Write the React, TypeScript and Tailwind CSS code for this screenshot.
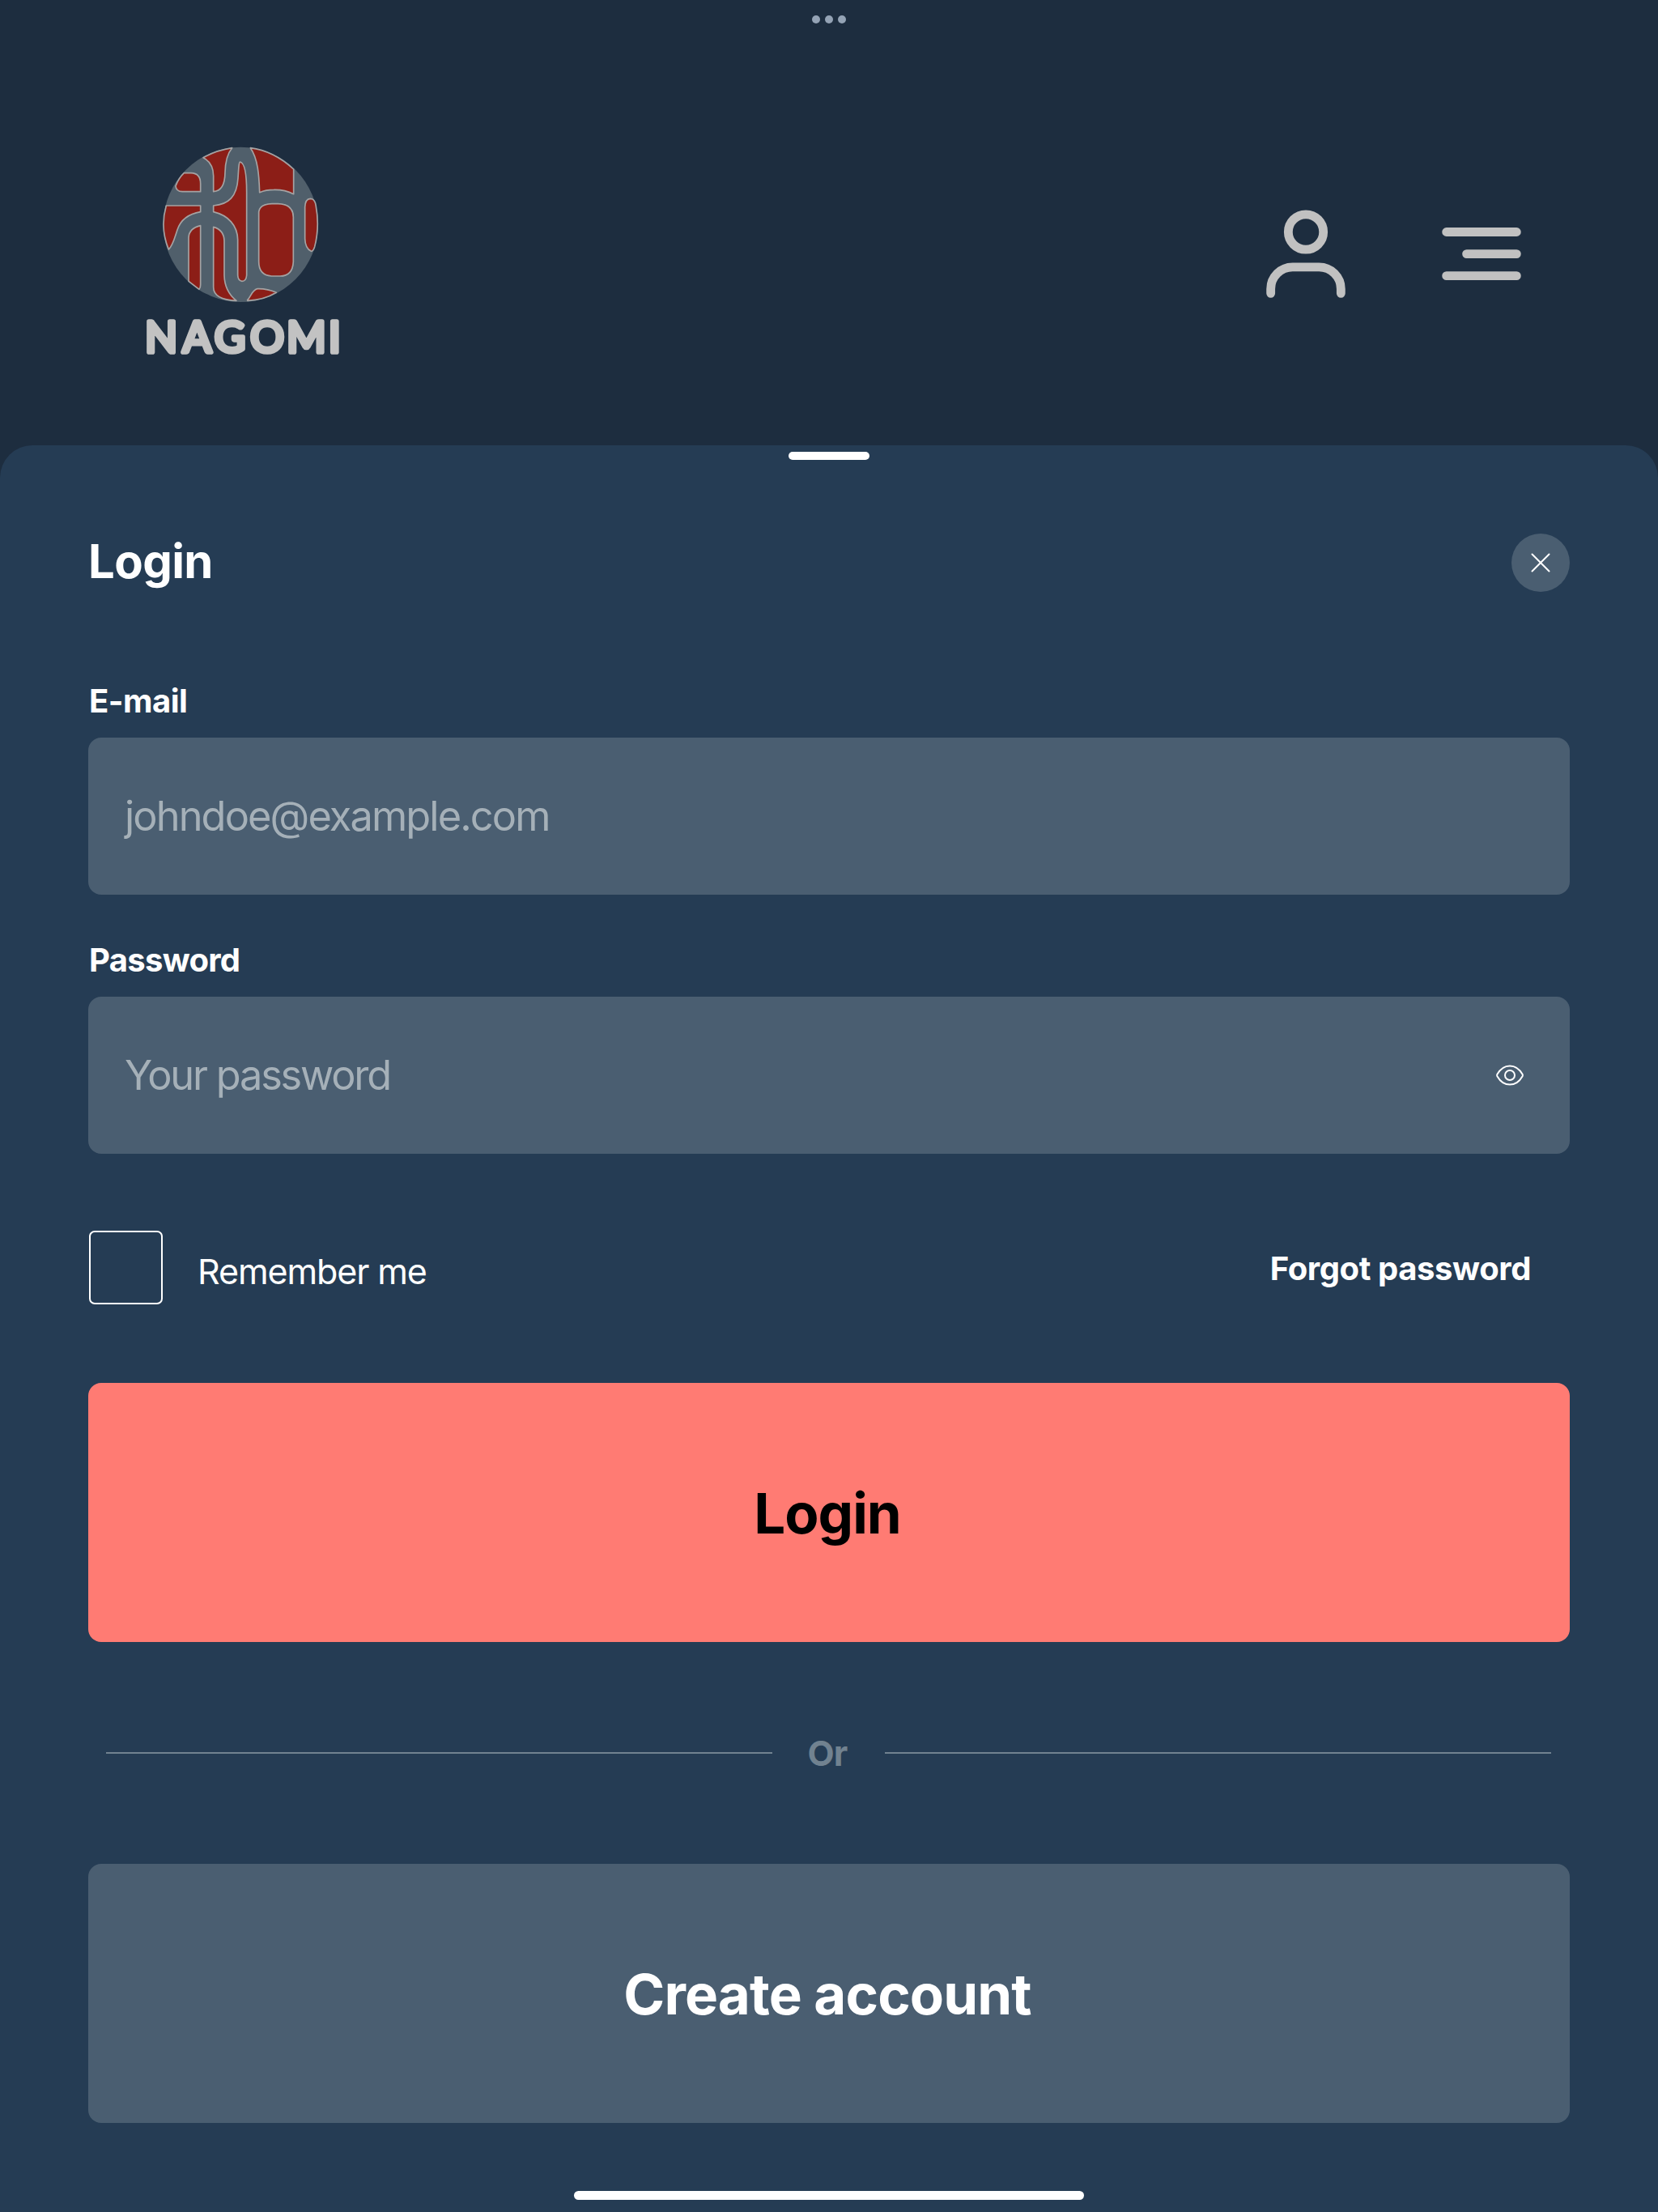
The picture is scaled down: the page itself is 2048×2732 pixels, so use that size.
import React from "react";

const Logo = () => {
  return (
    <svg width="280" height="300" viewBox="0 0 840 900">
      <circle cx="412" cy="352" r="287" fill="#505f6b" />
      <g fill="#8c1e17" stroke="#a5a3a3" strokeWidth="5" strokeLinejoin="round">
        <path d="M273 104Q322 77 380 68Q355 98 354 160Q353 228 311 230V172Q311 125 273 104Z" />
        <path d="M448 68Q534 79 608 147V239Q575 222 535 223Q505 223 482 233C480 170 476 108 448 68Z" />
        <path d="M202 161H228Q263 162 263 200V230H196Q172 229 171 209Q182 180 202 161Z" />
        <path d="M136 282H263V305C222 312 190 332 177 372C167 402 160 432 145 444Q112 365 136 282Z" />
        <path d="M311 282C368 277 398 248 402 180C404 148 405 120 410 120C426 124 434 168 434 232V540Q432 562 417 562Q402 560 401 540V408C400 355 366 318 311 305Z" />
        <path d="M263 356V575Q263 586 258 592L219 562V400Q221 366 263 356Z" />
        <path d="M311 361Q350 372 351 412V540C352 585 368 612 396 634Q311 630 311 584Z" />
        <path d="M528 275H550Q607 276 607 325V490Q604 543 558 543H526Q479 540 479 490V305Q483 276 528 275Z" />
        <path d="M650 288Q651 257 670 256Q684 256 689 274Q706 356 686 434Q681 450 673 451Q651 440 650 404Z" />
        <path d="M437 632C450 618 456 592 474 590Q510 589 544 604Q498 632 437 634Z" />
      </g>
      <text
        x="58 197 315 448 583 738"
        y="824"
        fontFamily="Lato, sans-serif"
        fontSize="156"
        fontWeight="400"
        fill="#c2c2c2"
        stroke="#c2c2c2"
        strokeWidth="17"
        strokeLinejoin="round"
      >
        NAGOMI
      </text>
    </svg>
  );
};

const UserIcon = () => (
  <svg width="130" height="130" viewBox="0 0 24 24" fill="none" stroke="#c1c1c1" strokeWidth="2" strokeLinecap="round">
    <circle cx="12" cy="6" r="4" />
    <path d="M4 20v-1a5 5 0 0 1 5-5h6a5 5 0 0 1 5 5v1" />
  </svg>
);

const MenuIcon = () => (
  <svg width="130" height="130" viewBox="0 0 24 24" fill="none" stroke="#c1c1c1" strokeWidth="2" strokeLinecap="round">
    <path d="M4 6h16M8.6 11H20M4 16h16" />
  </svg>
);

const EyeIcon = () => (
  <svg width="36" height="28" viewBox="0 0 36 28" fill="none" stroke="#fff" strokeWidth="2" strokeLinejoin="round">
    <path d="M2.4 12.8C6.2 6.2 11.4 2.4 18 2.4S29.8 6.2 33.6 12.8Q34.2 14 33.6 15.2C29.8 21.8 24.6 25.6 18 25.6S6.2 21.8 2.4 15.2Q1.8 14 2.4 12.8Z" />
    <circle cx="18" cy="14" r="6" />
  </svg>
);

const App = () => {
  return (
    <div className="flex h-[2732px] w-[2048px] flex-col bg-[#1d2d3f] font-[Inter,sans-serif] text-white">
      <header className="flex h-[550px] flex-col">
        <div className="flex justify-center gap-1.5 pt-[19px]">
          <span className="size-2.5 rounded-full bg-[#94a3b5]"></span>
          <span className="size-2.5 rounded-full bg-[#94a3b5]"></span>
          <span className="size-2.5 rounded-full bg-[#94a3b5]"></span>
        </div>
        <div className="flex items-start justify-between pt-[131px] pr-[153px] pl-40">
          <Logo />
          <div className="flex gap-[87px] pt-[93.5px]">
            <UserIcon />
            <MenuIcon />
          </div>
        </div>
      </header>

      <main className="flex flex-1 flex-col rounded-t-[40px] bg-[#253c54] px-[109px]">
        <div className="mt-2 h-2.5 w-[100px] self-center rounded-full bg-white"></div>

        <div className="mt-[91px] flex h-[72px] items-center justify-between">
          <h1 className="pb-1 text-[58px] font-bold tracking-[-0.6px]">Login</h1>
          <button className="flex size-[72px] items-center justify-center rounded-full bg-[#4a5e71]">
            <svg width="24" height="24" viewBox="0 0 24 24" stroke="#fff" strokeWidth="2" strokeLinecap="round">
              <path d="M1.5 1.5l21 21M22.5 1.5l-21 21" />
            </svg>
          </button>
        </div>

        <label className="mt-[105px] mb-[15px] pl-px text-[40px] leading-[60px] font-bold tracking-[-0.5px]">E-mail</label>
        <div className="flex h-[194px] items-center rounded-2xl bg-[#4a5e71] px-[45px]">
          <span className="text-[50.5px] tracking-[-1.9px] text-[#a5b0b8]">johndoe@example.com</span>
        </div>

        <label className="mt-[51px] mb-[15px] pl-px text-[40px] leading-[60px] font-bold tracking-[-0.7px]">Password</label>
        <div className="flex h-[194px] items-center justify-between rounded-2xl bg-[#4a5e71] pr-14 pl-[45px]">
          <span className="text-[50.5px] tracking-[-2.2px] text-[#a5b0b8]">Your password</span>
          <EyeIcon />
        </div>

        <div className="mt-[95px] flex h-[91px] items-center pr-12 pl-px">
          <div className="size-[91px] rounded-[7px] border-2 border-white"></div>
          <span className="pt-2.5 pl-[43px] text-[43px] tracking-[-1.1px]">Remember me</span>
          <span className="ml-auto pt-0.5 text-[40px] font-bold tracking-[-0.4px]">Forgot password</span>
        </div>

        <button className="mt-[97px] h-80 rounded-2xl bg-[#ff7b73] pt-1 pr-1 text-[69px] font-bold tracking-[-1px] text-black">
          Login
        </button>

        <div className="mt-[107px] flex h-[60px] items-center pr-[23px] pl-[22px]">
          <div className="h-0.5 flex-1 bg-[#718290]"></div>
          <span className="w-[139px] pr-[3px] text-center text-[43px] font-bold tracking-[-0.7px] text-[#718290]">Or</span>
          <div className="h-0.5 flex-1 bg-[#718290]"></div>
        </div>

        <button className="mt-[107px] h-80 rounded-2xl bg-[#4a5e71] pt-1 pr-1 text-[69px] font-bold tracking-[-0.9px]">
          Create account
        </button>

        <div className="mt-[84px] h-[11px] w-[630px] self-center rounded-full bg-white"></div>
      </main>
    </div>
  );
};

export default App;
